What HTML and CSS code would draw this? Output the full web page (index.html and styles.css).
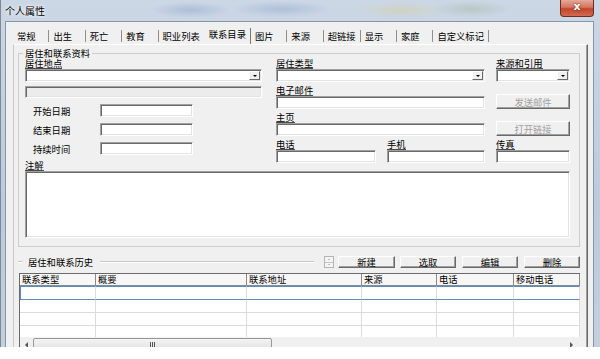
FILE: index.html
```html
<!DOCTYPE html>
<html>
  <head>
    <meta charset="utf-8">
    <title>个人属性</title>
    <link rel="stylesheet" href="styles.css">
  </head>
  <body>
    <div class="window">
      <div class="titlebar">
        <span class="title">个人属性</span>
        <span class="close">x</span>
      </div>

      <div class="client">
        <div class="tabs">
          <span class="tab">常规</span>
          <span class="tab">出生</span>
          <span class="tab">死亡</span>
          <span class="tab">教育</span>
          <span class="tab">职业列表</span>
          <span class="tab active">联系目录</span>
          <span class="tab">图片</span>
          <span class="tab">来源</span>
          <span class="tab">超链接</span>
          <span class="tab">显示</span>
          <span class="tab">家庭</span>
          <span class="tab">自定义标记</span>
        </div>

        <div class="panel">
          <fieldset class="group">
            <legend>居住和联系资料</legend>

            <div class="form-top">
              <div class="col-left">
                <span class="lbl">居住地点</span>
                <div class="field combo"><span class="drop"></span></div>
                <div class="field disabled"></div>
                <div class="date-row"><span>开始日期</span><div class="field"></div></div>
                <div class="date-row"><span>结束日期</span><div class="field"></div></div>
                <div class="date-row"><span>持续时间</span><div class="field"></div></div>
              </div>

              <div class="col-right">
                <div class="cell span2">
                  <span class="lbl">居住类型</span>
                  <div class="field combo"><span class="drop"></span></div>
                </div>
                <div class="cell">
                  <span class="lbl">来源和引用</span>
                  <div class="field combo"><span class="drop"></span></div>
                </div>

                <div class="cell span2">
                  <span class="lbl">电子邮件</span>
                  <div class="field"></div>
                </div>
                <div class="btn disabled">发送邮件</div>

                <div class="cell span2">
                  <span class="lbl">主页</span>
                  <div class="field"></div>
                </div>
                <div class="btn disabled">打开链接</div>

                <div class="cell">
                  <span class="lbl">电话</span>
                  <div class="field"></div>
                </div>
                <div class="cell">
                  <span class="lbl">手机</span>
                  <div class="field"></div>
                </div>
                <div class="cell">
                  <span class="lbl">传真</span>
                  <div class="field"></div>
                </div>
              </div>
            </div>

            <span class="lbl note-lbl">注解</span>
            <div class="field note"></div>
          </fieldset>

          <div class="history">
            <span class="etch short"></span>
            <span class="caption">居住和联系历史</span>
            <span class="etch long"></span>
            <span class="spin"><i class="up"></i><i class="down"></i></span>
            <span class="btn first">新建</span>
            <span class="btn">选取</span>
            <span class="btn wide-gap">编辑</span>
            <span class="btn wide-gap">删除</span>
          </div>

          <div class="list">
            <table>
              <colgroup>
                <col class="c1"><col class="c2"><col class="c3"><col class="c4"><col class="c5"><col class="c6">
              </colgroup>
              <tr class="head">
                <th>联系类型</th><th>概要</th><th>联系地址</th><th>来源</th><th>电话</th><th>移动电话</th>
              </tr>
              <tr class="sel"><td></td><td></td><td></td><td></td><td></td><td></td></tr>
              <tr><td></td><td></td><td></td><td></td><td></td><td></td></tr>
              <tr><td></td><td></td><td></td><td></td><td></td><td></td></tr>
              <tr class="last"><td></td><td></td><td></td><td></td><td></td><td></td></tr>
            </table>
            <div class="hscroll">
              <span class="arrow left"></span>
              <span class="thumb"><span class="grip"></span></span>
              <span class="arrow right"></span>
            </div>
          </div>
        </div>
      </div>
    </div>
  </body>
</html>
```

FILE: styles.css
```css
body {
  margin: 0;
  background: #fff;
  font-family: "Noto Sans CJK SC", "DejaVu Sans", sans-serif;
  font-size: 9.3px;
  color: #000;
}

.window {
  width: 600px;
  height: 347px;
  overflow: hidden;
  display: flex;
  flex-direction: column;
  box-sizing: border-box;
  border-left: 1px solid #7d8898;
  background:
    radial-gradient(ellipse 40px 8px at 190px 10px, rgba(120, 145, 190, 0.35), transparent),
    radial-gradient(ellipse 50px 8px at 280px 9px, rgba(110, 140, 185, 0.3), transparent),
    radial-gradient(ellipse 45px 8px at 400px 10px, rgba(215, 205, 150, 0.45), transparent),
    radial-gradient(ellipse 40px 8px at 470px 9px, rgba(150, 175, 140, 0.35), transparent),
    linear-gradient(#cbd7e5, #bccadb 60%, #c3cfdd);
}

/* title bar */
.titlebar {
  height: 21px;
  flex-shrink: 0;
  display: flex;
  align-items: flex-start;
}
.title {
  margin: 5px 0 0 4px;
  font-size: 10px;
  line-height: 12px;
  text-shadow: 0 0 5px #fff, 0 0 3px #fff;
}
.close {
  margin-left: auto;
  margin-right: 6px;
  width: 34px;
  height: 17px;
  box-sizing: border-box;
  border: 1px solid #6f2b22;
  border-top: none;
  border-radius: 0 0 4px 4px;
  background: linear-gradient(#e6a898, #d5755f 45%, #c2442a 55%, #d26b50);
  color: #fff;
  font: bold 11px "DejaVu Sans", sans-serif;
  line-height: 14px;
  text-align: center;
  text-shadow: 0 0 2px #5a1a12;
}

/* dialog client area */
.client {
  flex: 1;
  min-height: 0;
  margin: 0 6px 0 4px;
  border: 1px solid #8796a8;
  border-bottom: none;
  background: #f0f0f0;
  padding: 6px 5px 0 7px;
  display: flex;
  flex-direction: column;
}

.tabs {
  display: flex;
  align-items: flex-start;
  height: 16px;
  flex-shrink: 0;
}
.tab {
  box-sizing: border-box;
  min-width: 36.4px;
  height: 12px;
  margin-top: 2px;
  padding: 1px 4px 0 4px;
  border-right: 1px solid #8f8f8f;
  line-height: 10px;
  white-space: nowrap;
}
.tab:has(+ .active) {
  border-right-color: transparent;
}
.tab.active {
  height: 16px;
  margin-top: 0;
  padding-top: 1px;
  border-right-color: #777;
}

.panel {
  flex: 1;
  min-height: 0;
  border-top: 1px solid #fff;
  border-left: 1px solid #c9c9c9;
  border-right: 1px solid #696969;
  box-shadow: inset -1px 0 0 #a0a0a0;
  padding: 3px 7px 0 4px;
}

/* group box */
.group {
  margin: 0;
  padding: 0 9px 8px 6px;
  border: 1px solid #cdcdcd;
}
.group legend {
  padding: 0 2px;
  margin-left: -2px;
  line-height: 10px;
}

.form-top {
  display: flex;
  gap: 14px;
  margin-top: 1px;
}
.col-left {
  width: 237px;
  flex: none;
}
.col-right {
  flex: none;
  display: grid;
  grid-template-columns: 100px 98px 74px;
  column-gap: 11px;
  row-gap: 4px;
}
.cell {
  display: flex;
  flex-direction: column;
}
.span2 {
  grid-column: span 2;
}

.lbl {
  display: block;
  width: max-content;
  height: 9px;
  line-height: 9px;
  border-bottom: 1px solid #4a4a4a;
  white-space: nowrap;
}
.note-lbl {
  margin-top: -2px;
}

/* sunken edit boxes */
.field {
  box-sizing: border-box;
  height: 13px;
  background: #fff;
  border: 1px solid;
  border-color: #a0a0a0 #fff #fff #a0a0a0;
  box-shadow: inset 1px 1px 0 #696969, inset -1px -1px 0 #e3e3e3;
}
.field.disabled {
  height: 12px;
  margin-top: 4px;
  background: #ececec;
}
.field.note {
  height: 67px;
}
.combo {
  display: flex;
  align-items: center;
  justify-content: flex-end;
  padding-right: 1px;
}
.drop {
  width: 11px;
  height: 9px;
  box-sizing: border-box;
  background: #f0f0f0;
  border: 1px solid;
  border-color: #fff #696969 #696969 #fff;
  display: flex;
  align-items: center;
  justify-content: center;
}
.drop::after {
  content: "";
  border-left: 2px solid transparent;
  border-right: 2px solid transparent;
  border-top: 2px solid #000;
}

.date-row {
  display: flex;
  align-items: center;
  height: 13px;
  margin-top: 6px;
}
.date-row span {
  width: 75px;
  box-sizing: border-box;
  padding-left: 8px;
  line-height: 10px;
}
.date-row .field {
  width: 93px;
}

/* raised buttons */
.btn {
  box-sizing: border-box;
  height: 15px;
  background: #f0f0f0;
  border: 1px solid;
  border-color: #fff #696969 #696969 #fff;
  box-shadow: inset -1px -1px 0 #a0a0a0;
  display: flex;
  align-items: center;
  justify-content: center;
  line-height: 10px;
  white-space: nowrap;
}
.btn.disabled {
  color: #a0a0a0;
}
.col-right .btn {
  align-self: end;
}

/* history section */
.history {
  display: flex;
  align-items: center;
  height: 12px;
  margin-top: 9px;
}
.etch {
  height: 0;
  border-top: 1px solid #c8c8c8;
  border-bottom: 1px solid #fff;
}
.etch.short {
  width: 5px;
}
.etch.long {
  flex: 1;
}
.caption {
  margin: 0 7px 0 5px;
  line-height: 10px;
  white-space: nowrap;
}
.spin {
  width: 10px;
  height: 12px;
  box-sizing: border-box;
  margin: 0 4px 0 10px;
  display: flex;
  flex-direction: column;
  border: 1px solid #b5b5b5;
  background: #f4f4f4;
}
.spin i {
  flex: 1;
  display: flex;
  align-items: center;
  justify-content: center;
}
.spin i.up {
  border-bottom: 1px solid #c4c4c4;
}
.spin i.up::after {
  content: "";
  border-left: 1.5px solid transparent;
  border-right: 1.5px solid transparent;
  border-bottom: 1.5px solid #888;
}
.spin i.down::after {
  content: "";
  border-left: 1.5px solid transparent;
  border-right: 1.5px solid transparent;
  border-top: 1.5px solid #888;
}
.history .btn {
  width: 56px;
  height: 12px;
  margin-left: 5px;
}
.history .btn.first {
  width: 57px;
  margin-left: 0;
}
.history .btn.wide-gap {
  margin-left: 6px;
}

/* list view */
.list {
  margin: 5px 0 0 1px;
  border-top: 1px solid #696969;
  border-left: 1px solid #696969;
  background: #fff;
}
.list table {
  border-collapse: separate;
  border-spacing: 0;
  table-layout: fixed;
  width: 560px;
}
.c1 { width: 76px; }
.c2 { width: 151px; }
.c3 { width: 115px; }
.c4 { width: 75px; }
.c5 { width: 77px; }
.c6 { width: 66px; }

.list tr {
  height: 13px;
}
.list tr.head {
  height: 12px;
}
.list tr.sel {
  height: 14px;
}
.list tr.last {
  height: 11px;
}
.list th {
  padding: 0 2px;
  text-align: left;
  vertical-align: middle;
  font-weight: normal;
  line-height: 11px;
  background: #f7f7f7;
  border-right: 1px solid #8a8a8a;
  border-bottom: 1px solid #8a8a8a;
  white-space: nowrap;
}
.list td {
  padding: 0;
  border-right: 1px solid #dcdcdc;
  border-bottom: 1px solid #dcdcdc;
}
.list tr.last td {
  border-bottom: none;
}
.list tr.sel td {
  border-top: 1px solid #5a8cc6;
  border-bottom-color: #5a8cc6;
}
.list tr.sel td:first-child {
  box-shadow: inset 1px 0 0 #5a8cc6;
}

.hscroll {
  height: 15px;
  display: flex;
  align-items: stretch;
  background: #f0f0f0;
}
.arrow {
  width: 13px;
  display: flex;
  align-items: center;
  justify-content: center;
}
.arrow.left::after {
  content: "";
  border-top: 3px solid transparent;
  border-bottom: 3px solid transparent;
  border-right: 3px solid #555;
}
.arrow.right {
  margin-left: auto;
  margin-right: 2px;
}
.arrow.right::after {
  content: "";
  border-top: 3px solid transparent;
  border-bottom: 3px solid transparent;
  border-left: 3px solid #555;
}
.thumb {
  width: 239px;
  margin: 1px 0;
  box-sizing: border-box;
  border: 1px solid #989898;
  border-radius: 2px;
  background: linear-gradient(#f4f4f4, #e0e0e0);
  display: flex;
  align-items: center;
  justify-content: center;
}
.grip {
  width: 5px;
  height: 5px;
  background: repeating-linear-gradient(to right, #555 0 1px, transparent 1px 2px);
}
```
